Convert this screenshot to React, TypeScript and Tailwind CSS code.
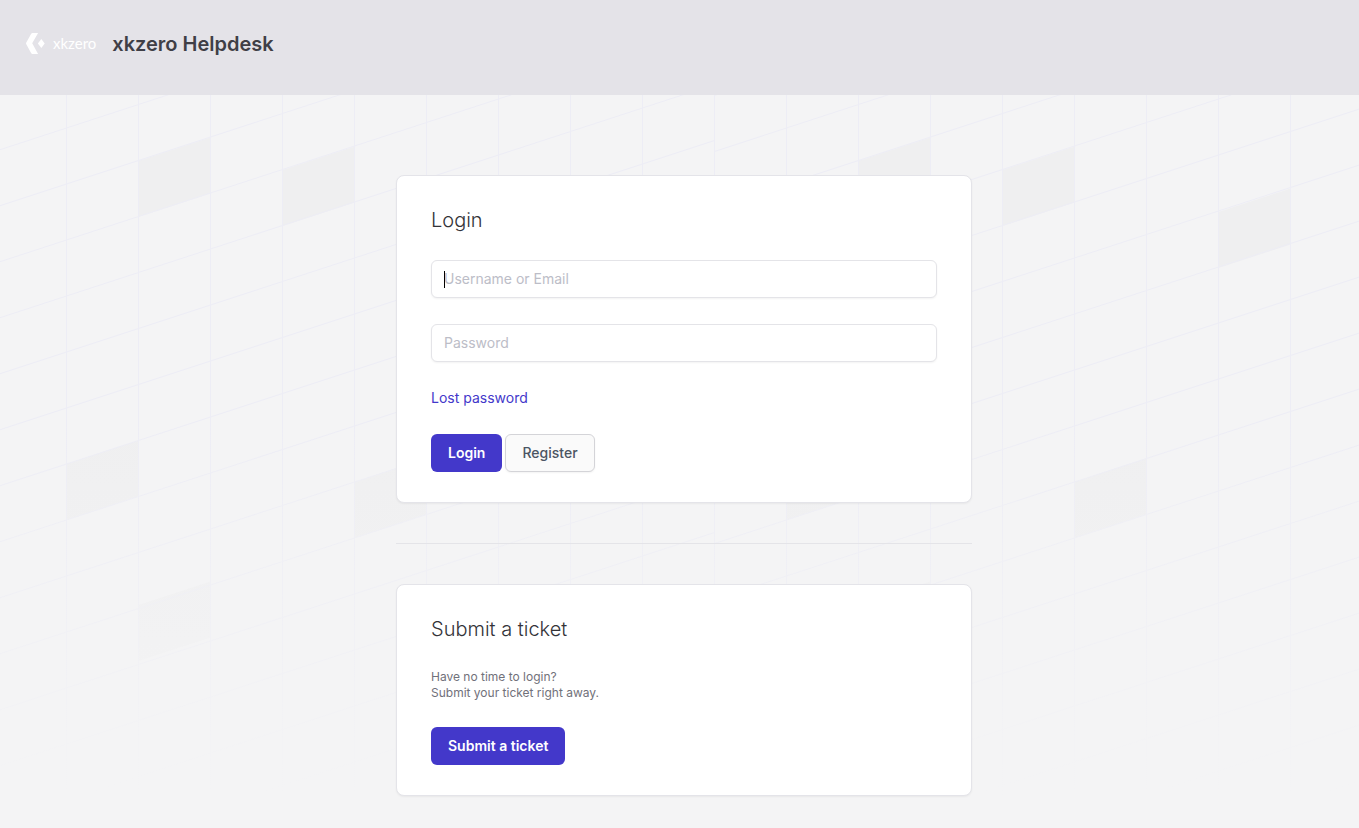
import type { ReactNode } from "react";

const TILE_WIDTH = 720;
const TILE_HEIGHT = 700;
const COLUMN = 72;
const ROW = 56;
const SLOPE = 23.5;

const tileOrigins = [-5.5, 714.5, 1434.5, 2154.5];
const rowOffsets = Array.from({ length: 17 }, (_, i) => i * ROW + 0.5);
const columnOffsets = Array.from({ length: 10 }, (_, i) => i * COLUMN);

// Upper left corner of each shaded cell within one tile.
const shadedCells = [
  { x: 144, y: 66 },
  { x: 288, y: 75 },
  { x: 504, y: 117 },
  { x: 72, y: 369 },
  { x: 360, y: 387 },
  { x: 144, y: 510 },
];

function BackgroundGrid() {
  return (
    <svg
      aria-hidden="true"
      className="pointer-events-none absolute inset-x-0 top-0 h-[700px] w-full"
    >
      <defs>
        <linearGradient id="grid-fade" x1="0" y1="0" x2="0" y2="1">
          <stop offset="0.45" stopColor="#f4f4f5" stopOpacity="0" />
          <stop offset="1" stopColor="#f4f4f5" stopOpacity="1" />
        </linearGradient>
      </defs>
      {tileOrigins.map((origin) => (
        <g key={origin} transform={`translate(${origin} 0)`}>
          {shadedCells.map(({ x, y }) => (
            <polygon
              key={`${x}-${y}`}
              points={`${x},${y} ${x + COLUMN},${y - SLOPE} ${x + COLUMN},${y - SLOPE + ROW} ${x},${y + ROW}`}
              fill="#efeff0"
            />
          ))}
          <g stroke="#ededf5" strokeWidth="1" fill="none">
            {columnOffsets.map((x) => (
              <path key={x} d={`M${x} 0V${TILE_HEIGHT}`} />
            ))}
            {rowOffsets.map((y) => (
              <path key={y} d={`M0 ${y}L${TILE_WIDTH} ${y - SLOPE * 10}`} />
            ))}
          </g>
        </g>
      ))}
      <rect width="100%" height="100%" fill="url(#grid-fade)" />
    </svg>
  );
}

function Logo() {
  return (
    <a href="#" className="flex items-center gap-2 text-white">
      <svg width="19" height="21" viewBox="0 0 19 21" fill="currentColor" aria-hidden="true">
        <path d="M6.5 0h5.6L6.2 10.3 12.1 21H6.5Q5.7 21 5.2 20.2L.3 11.3q-.5-.9 0-1.8L5.2.8Q5.7 0 6.5 0Z" />
        <path d="M15.3 6 18.7 10.5 15.3 15 11.9 10.5Z" />
      </svg>
      <span className="font-['Lato',sans-serif] text-[15px] leading-5">xkzero</span>
    </a>
  );
}

function Card({ title, children }: { title: string; children: ReactNode }) {
  return (
    <section className="flex flex-col gap-[26px] rounded-lg border border-[#e4e4e9] bg-white px-[34px] py-[30px] shadow-xs">
      <h2 className="text-xl font-light leading-7 text-[#333338]">{title}</h2>
      {children}
    </section>
  );
}

const fieldClass =
  "block h-[38px] w-full rounded-md border border-[#e4e4e8] bg-white px-3 pb-0.5 text-sm text-[#3f3f46] shadow-xs outline-none placeholder:text-[#bcbdc7]";
const primaryButton =
  "h-[38px] rounded-md bg-[#4338ca] px-[17px] text-sm font-semibold text-white";

export default function App() {
  return (
    <div className="flex min-h-screen flex-col bg-[#f4f4f5] font-['Inter',sans-serif]">
      <header className="flex h-[95px] items-start gap-4 bg-[#e4e3e8] px-[26px] pt-7">
        <div className="flex h-[30px] items-center">
          <Logo />
        </div>
        <h1 className="text-xl font-semibold leading-8 text-[#3f3f46]">xkzero Helpdesk</h1>
      </header>

      <main className="relative flex-1 pt-20 pb-8 pl-[9px]">
        <BackgroundGrid />
        <div className="relative mx-auto flex w-full max-w-[576px] flex-col gap-10">
          <Card title="Login">
            <form className="flex flex-col gap-[26px]" onSubmit={(e) => e.preventDefault()}>
              <div className="relative">
                <input
                  type="text"
                  name="username"
                  aria-label="Username or Email"
                  placeholder="Username or Email"
                  className={fieldClass}
                />
                <span className="pointer-events-none absolute top-[11px] left-[13px] h-[17px] w-px bg-black" />
              </div>
              <input
                type="password"
                name="password"
                aria-label="Password"
                placeholder="Password"
                className={fieldClass}
              />
              <a href="#" className="self-start text-sm leading-5 text-[#4338ca]">
                Lost password
              </a>
              <div className="flex gap-[3px]">
                <button type="submit" className={primaryButton}>
                  Login
                </button>
                <button
                  type="button"
                  className="h-[38px] rounded-md border border-[#d4d4d8] bg-[#fafafa] px-4 text-sm font-medium text-[#4b5563] shadow-xs"
                >
                  Register
                </button>
              </div>
            </form>
          </Card>

          <hr className="border-t border-[#e4e4e8]" />

          <Card title="Submit a ticket">
            <p className="text-xs leading-4 text-[#71717a]">
              Have no time to login?
              <br />
              Submit your ticket right away.
            </p>
            <button type="button" className={`${primaryButton} self-start`}>
              Submit a ticket
            </button>
          </Card>
        </div>
      </main>
    </div>
  );
}
